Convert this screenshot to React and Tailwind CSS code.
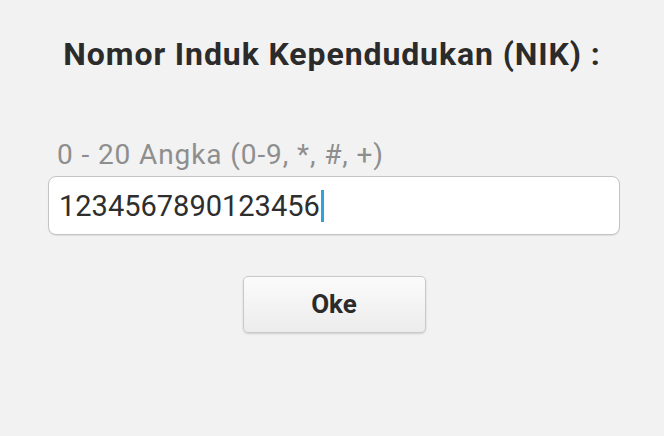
export default function App() {
  return (
    <div className="w-[664px] h-[436px] bg-[#f2f2f2] flex flex-col font-['Roboto',sans-serif] overflow-hidden">
      <h1 className="mt-[35px] text-center text-[32px] leading-[38px] font-bold text-[#2b2b2b] tracking-[0.9px]">
        Nomor Induk Kependudukan (NIK) :
      </h1>
      <p className="mt-[66px] mb-[5px] ml-[57px] text-[28px] leading-[32px] text-[#8e8e8e] tracking-[0.9px]">
        0 - 20 Angka (0-9, *, #, +)
      </p>
      <div className="ml-[48px] w-[572px] h-[59px] bg-white border border-[#c4c4c4] rounded-[8px] flex items-center pl-[10px] shadow-[0_1px_1px_rgba(0,0,0,0.08)]">
        <span className="text-[29px] leading-[34px] text-[#2e2e2e]">1234567890123456</span>
        <span className="ml-[1px] w-[3px] h-[32px] bg-[#33a0dc]" />
      </div>
      <div className="mt-[41px] flex justify-center pl-[4px]">
        <button className="w-[183px] h-[57px] rounded-[5px] border border-[#c9c9c9] bg-gradient-to-b from-[#fbfbfb] to-[#ececec] shadow-[0_1px_2px_rgba(0,0,0,0.15)] text-[26px] font-bold text-[#2b2b2b]">
          Oke
        </button>
      </div>
    </div>
  );
}
